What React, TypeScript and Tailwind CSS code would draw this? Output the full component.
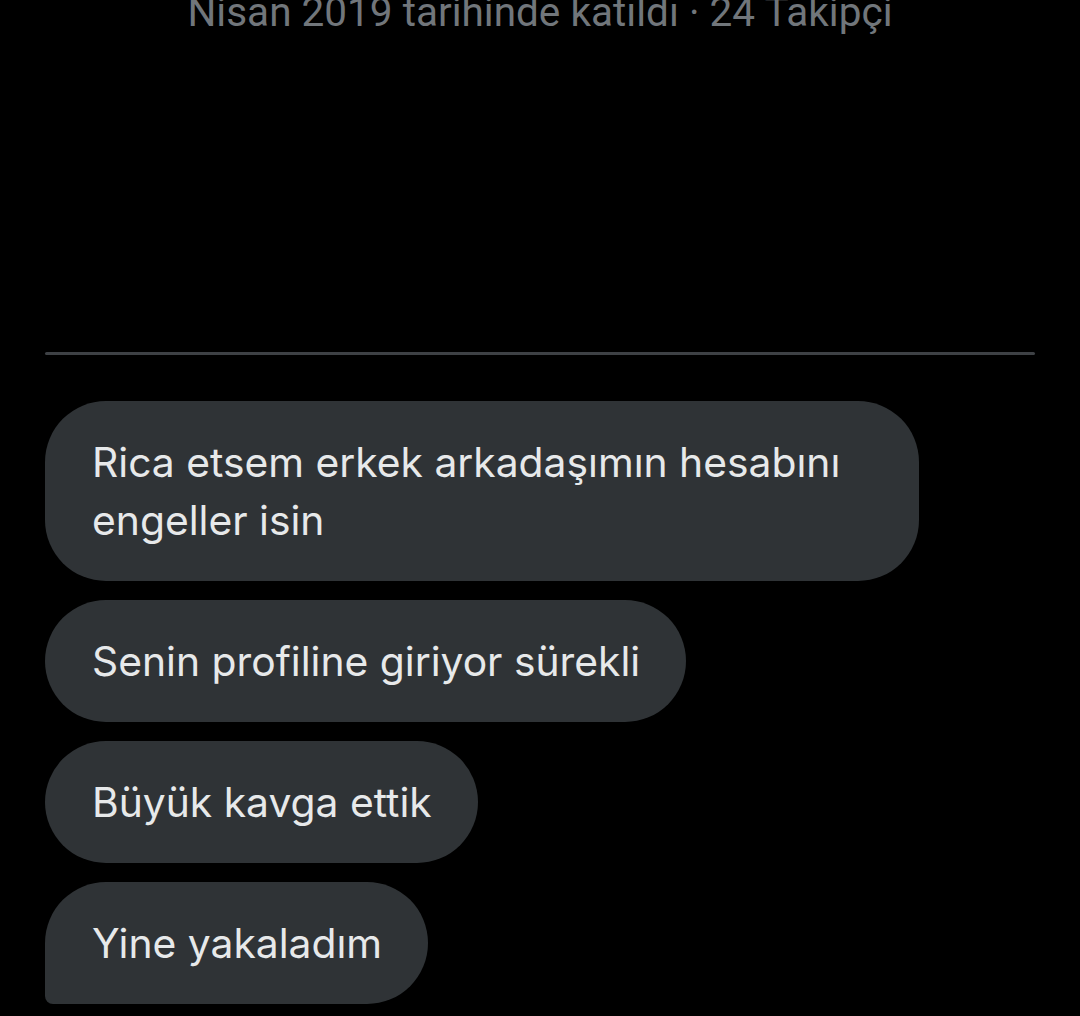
import React from "react";

type Message = {
  text: string;
  last?: boolean;
};

const messages: Message[] = [
  { text: "Rica etsem erkek arkadaşımın hesabını engeller isin" },
  { text: "Senin profiline giriyor sürekli" },
  { text: "Büyük kavga ettik" },
  { text: "Yine yakaladım", last: true },
];

const App = () => {
  return (
    <div className="min-h-[1016px] w-[1080px] overflow-hidden bg-black font-['Roboto',sans-serif]">
      <p className="mt-[-8px] h-[40px] text-center text-[40.5px] leading-[40px] text-[#71767b]">
        Nisan 2019 tarihinde katıldı · 24 Takipçi
      </p>

      <div className="mx-[45px] mt-[320px] h-[3px] rounded-full bg-[#3e4145]" />

      <ul className="mt-[46px] flex flex-col items-start gap-[19px] px-[45px] font-['Inter',sans-serif]">
        {messages.map((msg, idx) => (
          <li
            key={idx}
            className={`max-w-[874px] rounded-[61px] bg-[#2f3336] py-[32px] pl-[47px] pr-[46px] text-[40.8px] leading-[58px] text-[#e7e9ea] ${
              msg.last ? "rounded-bl-[8px]" : ""
            }`}
          >
            {msg.text}
          </li>
        ))}
      </ul>
    </div>
  );
};

export default App;
